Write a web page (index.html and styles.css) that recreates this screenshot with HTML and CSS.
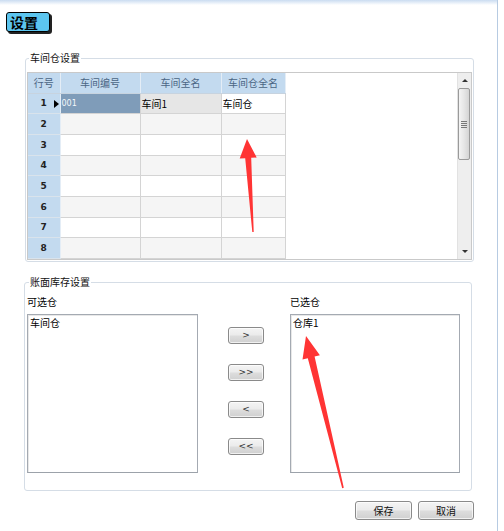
FILE: index.html
```html
<!DOCTYPE html>
<html lang="zh-CN">
<head>
    <meta charset="UTF-8">
    <meta name="viewport" content="width=device-width, initial-scale=1.0">
    <title>设置</title>
    <link rel="stylesheet" href="styles.css">
</head>
<body>
    <div class="window">
        <div class="topbar"></div>
        <div class="title">设置</div>

        <!-- 车间仓设置 -->
        <fieldset class="group group-ws">
            <legend>车间仓设置</legend>
            <div class="grid">
                <table class="sheet">
                    <thead>
                        <tr>
                            <th class="rowhead">行号</th>
                            <th class="c1">车间编号</th>
                            <th class="c2">车间全名</th>
                            <th class="c3">车间仓全名</th>
                        </tr>
                    </thead>
                    <tbody>
                        <tr>
                            <td class="rowhead current">1<span class="pointer"></span></td>
                            <td class="sel">001</td>
                            <td class="focus">车间1</td>
                            <td>车间仓</td>
                        </tr>
                        <tr><td class="rowhead">2</td><td></td><td></td><td></td></tr>
                        <tr><td class="rowhead">3</td><td></td><td></td><td></td></tr>
                        <tr><td class="rowhead">4</td><td></td><td></td><td></td></tr>
                        <tr><td class="rowhead">5</td><td></td><td></td><td></td></tr>
                        <tr><td class="rowhead">6</td><td></td><td></td><td></td></tr>
                        <tr><td class="rowhead">7</td><td></td><td></td><td></td></tr>
                        <tr><td class="rowhead">8</td><td></td><td></td><td></td></tr>
                    </tbody>
                </table>
                <div class="blank"></div>
                <div class="vscroll">
                    <div class="arrow up"></div>
                    <div class="thumb"><span class="grip"></span></div>
                    <div class="track"></div>
                    <div class="arrow down"></div>
                </div>
            </div>
        </fieldset>

        <!-- 账面库存设置 -->
        <fieldset class="group group-stock">
            <legend>账面库存设置</legend>
            <div class="picker">
                <div class="pick-col">
                    <div class="pick-label">可选仓</div>
                    <div class="listbox">
                        <div class="item">车间仓</div>
                    </div>
                </div>
                <div class="moves">
                    <button class="btn move">&gt;</button>
                    <button class="btn move">&gt;&gt;</button>
                    <button class="btn move">&lt;</button>
                    <button class="btn move">&lt;&lt;</button>
                </div>
                <div class="pick-col">
                    <div class="pick-label">已选仓</div>
                    <div class="listbox">
                        <div class="item">仓库1</div>
                    </div>
                </div>
            </div>
        </fieldset>

        <div class="actions">
            <button class="btn action save">保存</button>
            <button class="btn action">取消</button>
        </div>
    </div>

    <!-- red annotation arrows drawn over the form -->
    <svg class="marks" width="504" height="531" viewBox="0 0 504 531">
        <polygon fill="#ff3434" points="247,139 256.7,157.5 251.2,157.8 253.7,232 252.3,232 245.2,158.2 239.7,158.5"/>
        <polygon fill="#ff3434" points="306,336 319.9,355.3 314.6,356.6 343.8,487.8 342.2,488.2 307.8,358.2 302.5,359.5"/>
    </svg>
</body>
</html>
```

FILE: styles.css
```css
* {
    box-sizing: border-box;
}
body {
    margin: 0;
    font-family: "Noto Sans CJK SC", "Liberation Sans", sans-serif;
    font-size: 10px;
    color: #000;
    background-color: #fff;
}
.window {
    width: 498px;
    height: 531px;
    border-right: 1px solid #b7cbe2;
}
.topbar {
    height: 5px;
    background: linear-gradient(#cadcf1, #fff);
}
.title {
    margin: 7px 0 0 6px;
    width: 44px;
    height: 20px;
    line-height: 18px;
    padding-left: 3px;
    font-size: 14px;
    font-weight: bold;
    background-color: #5cc5ef;
    border: 1px solid #000;
    border-radius: 3px;
    box-shadow: 2px 2px 0 #222;
}

/* group boxes */
.group {
    border: 1px solid #d5dde6;
    border-radius: 3px;
    margin: 0;
    min-width: 0;
}
.group legend {
    line-height: 14px;
    padding: 0 1px;
    margin-left: 2px;
    color: #111;
}
.group-ws {
    margin: 19px 0 0 25px;
    width: 449px;
    padding: 7px 1px 1px 1px;
}
.group-stock {
    margin: 13px 0 0 24px;
    width: 448px;
    padding: 6px 11px 17px 2px;
}

/* data grid */
.grid {
    display: flex;
    height: 188px;
    border: 1px solid #c9c9c9;
    background-color: #fff;
}
.sheet {
    border-collapse: collapse;
    table-layout: fixed;
    width: 257px;
    align-self: flex-start;
}
.sheet th,
.sheet td {
    border: 1px solid #d4d4d4;
    padding: 0 1px;
    height: 20.7px;
    white-space: nowrap;
    overflow: hidden;
}
.sheet th {
    height: 20px;
    border-top: none;
    font-weight: normal;
    color: #4a6584;
    background-color: #c3daef;
    border-color: #dde8f3 #e4edf6 #c7d3df #e4edf6;
}
.sheet .rowhead {
    width: 32px;
    border-left: none;
    text-align: center;
    background-color: #c3daef;
}
.sheet td.rowhead {
    position: relative;
    font-family: "DejaVu Sans", sans-serif;
    font-size: 9px;
    font-weight: bold;
    color: #222;
    border-color: #d9e3ec #e4edf6 #d9e3ec #c3daef;
}
.sheet .c1 { width: 80px; }
.sheet .c2 { width: 81px; }
.sheet .c3 { width: 64px; }
.sheet tbody tr:nth-child(even) td {
    background-color: #f5f5f5;
}
.sheet tbody tr:nth-child(even) td.rowhead {
    background-color: #c3daef;
}
.sheet td.sel {
    background-color: #7f9cb9;
    color: #f4f7fa;
    font-family: "DejaVu Sans", sans-serif;
    font-size: 8px;
}
.sheet td.focus {
    background-color: #e6e6e6;
}
.pointer {
    position: absolute;
    right: 1px;
    top: 6px;
    width: 0;
    height: 0;
    border-top: 4px solid transparent;
    border-bottom: 4px solid transparent;
    border-left: 5px solid #000;
}
.blank {
    flex: 1;
}
.vscroll {
    width: 14px;
    display: flex;
    flex-direction: column;
    background-color: #eeeeee;
    border-left: 1px solid #e2e2e2;
}
.vscroll .arrow {
    height: 15px;
    display: flex;
    align-items: center;
    justify-content: center;
}
.vscroll .arrow::after {
    content: "";
    width: 0;
    height: 0;
    border-left: 3px solid transparent;
    border-right: 3px solid transparent;
}
.vscroll .up::after {
    border-bottom: 3px solid #333;
}
.vscroll .down::after {
    border-top: 3px solid #333;
}
.vscroll .thumb {
    height: 72px;
    margin: 0 1px 0 0;
    border: 1px solid #9a9a9a;
    border-radius: 2px;
    background: linear-gradient(to right, #f4f4f4, #e6e6e6 50%, #d4d4d4);
    display: flex;
    align-items: center;
    justify-content: center;
}
.grip {
    width: 6px;
    height: 7px;
    background: repeating-linear-gradient(#777 0 1px, transparent 1px 2px);
}
.vscroll .track {
    flex: 1;
}

/* warehouse picker */
.picker {
    display: flex;
}
.pick-col {
    width: 171px;
}
.pick-col + .moves + .pick-col {
    width: 170px;
}
.pick-label {
    line-height: 14px;
    margin-bottom: 5px;
}
.listbox {
    height: 159px;
    border: 1px solid #a4aab2;
    border-bottom-color: #9ca2aa;
    box-shadow: inset 1px 1px 0 #e8e8e8;
    padding: 1px 2px;
    background-color: #fff;
}
.item {
    line-height: 14px;
}
.moves {
    display: flex;
    flex-direction: column;
    gap: 20px;
    margin: 32px 26px 0 30px;
}

/* buttons */
.btn {
    font-family: "Noto Sans CJK SC", "Liberation Sans", sans-serif;
    font-size: 10px;
    color: #111;
    padding: 0;
    border: 1px solid #8a8a8a;
    border-radius: 3px;
    background: linear-gradient(#f4f4f4 0%, #ebebeb 48%, #dddddd 52%, #d0d0d0 100%);
    box-shadow: inset 0 0 0 1px rgba(255, 255, 255, 0.7);
    line-height: 1;
}
.btn.move {
    width: 36px;
    height: 17px;
    font-family: "DejaVu Sans", sans-serif;
    font-size: 9px;
    color: #333;
}
.actions {
    display: flex;
    justify-content: flex-end;
    gap: 6px;
    margin-top: 10px;
    padding-right: 23px;
}
.btn.action {
    width: 56px;
    height: 19px;
}
.btn.save {
    width: 57px;
}

.marks {
    position: absolute;
    left: 0;
    top: 0;
    pointer-events: none;
}
```
